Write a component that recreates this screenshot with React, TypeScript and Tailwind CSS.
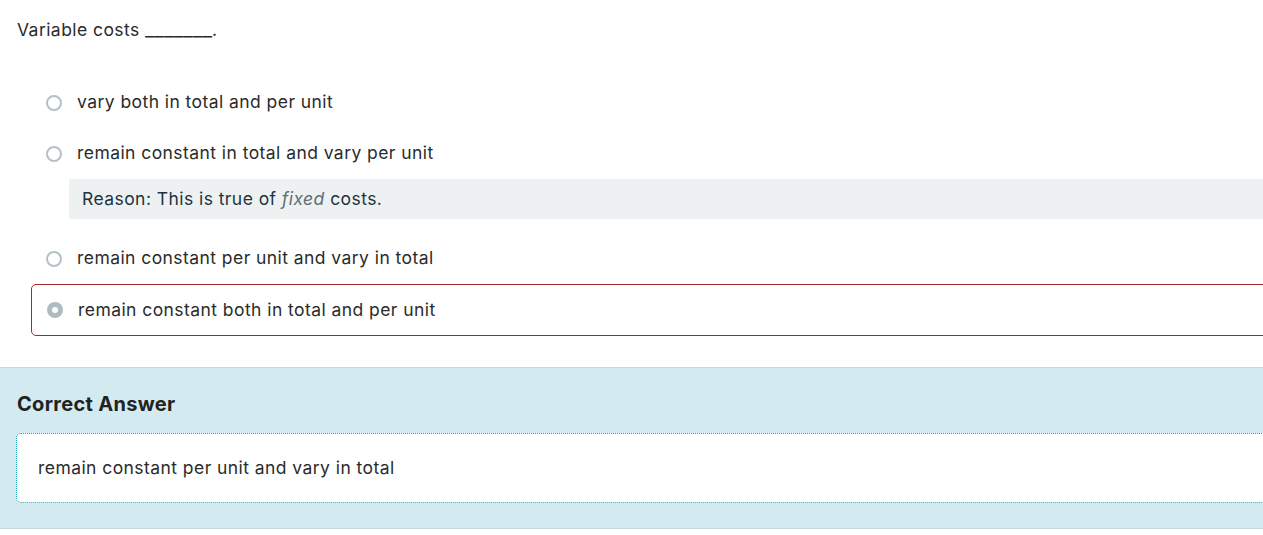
import React from 'react'

const options = [
  { id: 'a', text: 'vary both in total and per unit' },
  { id: 'b', text: 'remain constant in total and vary per unit', reason: true },
  { id: 'c', text: 'remain constant per unit and vary in total' },
  { id: 'd', text: 'remain constant both in total and per unit', selected: true },
]

function Radio({ checked }: { checked?: boolean }) {
  if (checked) {
    return (
      <span className="flex h-4 w-4 shrink-0 items-center justify-center rounded-full bg-[#aebcc2]">
        <span className="h-[6px] w-[6px] rounded-full bg-white" />
      </span>
    )
  }
  return <span className="h-4 w-4 shrink-0 rounded-full border-2 border-[#b3c1c6] bg-white" />
}

export default function App() {
  return (
    <div
      className="min-h-[535px] w-full overflow-hidden bg-white text-[17.5px] tracking-[0.025em] text-[#2b2b2b]"
      style={{ fontFamily: 'Inter, "Open Sans", sans-serif' }}
    >
      <p className="px-[17px] pt-[18px] leading-6">
        Variable costs{' '}
        <span className="mr-[11px] inline-block origin-left scale-x-[1.2] tracking-normal">_______</span>.
      </p>

      <ul className="mt-[35px] mr-[-20px] pl-[31px]">
        {options.map((o) =>
          o.selected ? (
            <li
              key={o.id}
              className="flex h-[52px] items-center gap-[15px] rounded-[5px] border border-[#a8292b] pl-[15px]"
            >
              <Radio checked />
              <span>{o.text}</span>
            </li>
          ) : (
            <li key={o.id}>
              <div className="flex h-[51px] items-center gap-[15px] pl-[15px]">
                <Radio />
                <span>{o.text}</span>
              </div>
              {o.reason && (
                <div className="mb-[14px] ml-[38px] flex h-10 items-center bg-[#edf1f2] px-[13px] text-[#1e3440]">
                  <span>
                    Reason: This is true of <em className="text-[#5d6e78]">fixed</em> costs.
                  </span>
                </div>
              )}
            </li>
          ),
        )}
      </ul>

      <section className="mt-[31px] border-y border-[#c8d8dc] bg-[#d3ebf0] pb-[25px] pl-4 pt-[24px]">
        <h2 className="pl-px text-[20px] font-bold leading-6 tracking-[0.015em] text-[#222]">Correct Answer</h2>
        <div className="mr-[-20px] mt-[17px] flex h-[70px] items-center rounded-[5px] border border-dotted border-[#1b9db3] bg-white pl-[21px]">
          remain constant per unit and vary in total
        </div>
      </section>
    </div>
  )
}
